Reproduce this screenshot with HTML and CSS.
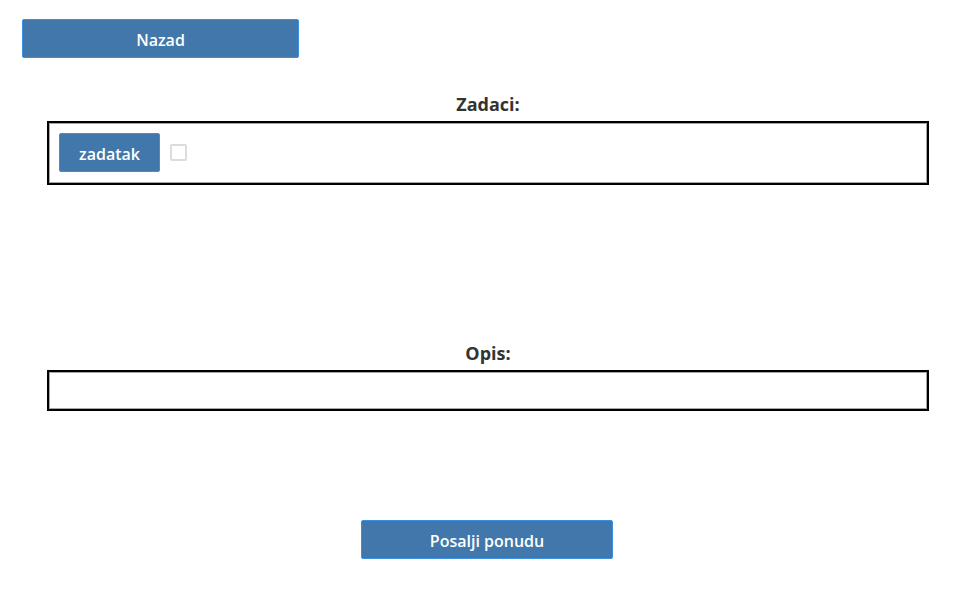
FILE: index.html
```html
<!DOCTYPE html>
<html>
<head>
<meta charset="utf-8">
<link rel="stylesheet" href="styles.css">
</head>
<body>
<div class="page">
  <div class="top-bar">
    <button class="btn btn-back">Nazad</button>
  </div>
  <section class="section section-tasks">
    <h2 class="section-title">Zadaci:</h2>
    <div class="panel panel-tasks">
      <button class="btn btn-task">zadatak</button>
      <span class="check"></span>
    </div>
  </section>
  <section class="section section-desc">
    <h2 class="section-title">Opis:</h2>
    <div class="panel panel-desc"></div>
  </section>
  <div class="submit-row">
    <button class="btn btn-submit">Posalji ponudu</button>
  </div>
</div>
</body>
</html>
```

FILE: styles.css
```css
* { box-sizing: border-box; }
html, body { margin: 0; padding: 0; background: #fff; }
body {
  font-family: "Open Sans", "Noto Sans", sans-serif;
  color: #333;
}
.page {
  width: 977px;
  padding: 19px 0 0 0;
  display: flex;
  flex-direction: column;
}
.top-bar {
  padding-left: 22px;
  display: flex;
}
.btn {
  background: #4177aa;
  border: 1px solid #3a90e0;
  border-radius: 2px;
  color: #fff;
  font-family: "Open Sans", "Noto Sans", sans-serif;
  font-weight: 600;
  font-size: 16px;
  height: 39px;
  padding: 2px 0 0 0;
  cursor: pointer;
}
.btn-back { width: 277px; }
.section {
  display: flex;
  flex-direction: column;
  align-items: center;
  padding: 0 48px 0 47px;
}
.section-tasks { margin-top: 34px; }
.section-desc { margin-top: 156px; }
.section-title {
  margin: 0 0 5px 0;
  font-size: 18px;
  line-height: 24px;
  font-weight: 700;
  color: #333;
}
.panel {
  width: 100%;
  border: 2px solid #000;
  box-shadow: inset 0 0 0 1px rgba(0,0,0,0.35);
  background: #fff;
}
.panel-tasks {
  padding: 10px 10px 11px 10px;
  height: 64px;
  display: flex;
  align-items: center;
}
.btn-task { width: 101px; }
.check {
  width: 17px;
  height: 17px;
  margin-left: 10px;
  border: 2px solid #dcdcdc;
  border-radius: 2px;
  background: #fff;
}
.panel-desc { height: 41px; }
.submit-row {
  margin-top: 109px;
  display: flex;
  justify-content: center;
  padding-right: 3px;
}
.btn-submit { width: 252px; }
```
